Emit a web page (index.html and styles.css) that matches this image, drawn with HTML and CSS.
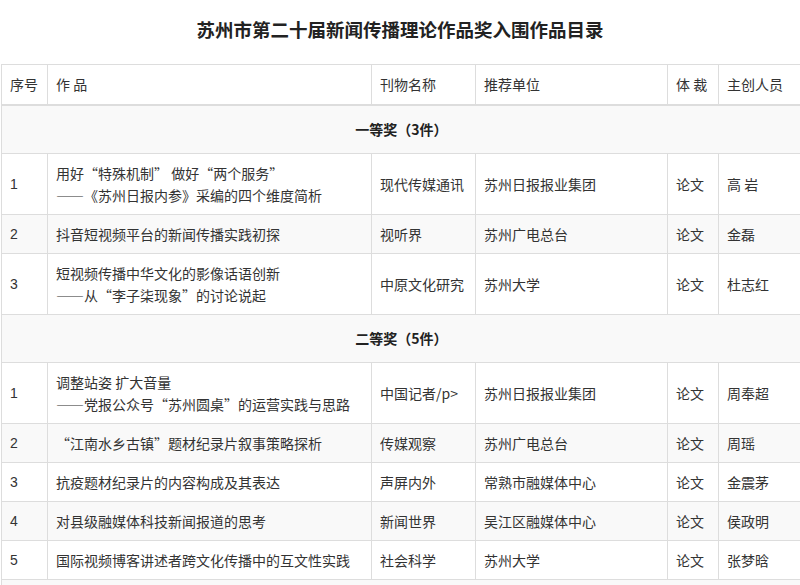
FILE: index.html
```html
<!DOCTYPE html>
<html lang="zh-CN">
<head>
<meta charset="utf-8">
<title>苏州市第二十届新闻传播理论作品奖入围作品目录</title>
<link rel="stylesheet" href="styles.css">
</head>
<body>
<div class="page">
  <h1 class="title">苏州市第二十届新闻传播理论作品奖入围作品目录</h1>
  <div class="table-wrap">
    <table class="list">
      <colgroup>
        <col class="c-no">
        <col class="c-work">
        <col class="c-pub">
        <col class="c-unit">
        <col class="c-type">
        <col class="c-author">
      </colgroup>
      <thead>
        <tr>
          <th>序号</th>
          <th>作 品</th>
          <th>刊物名称</th>
          <th>推荐单位</th>
          <th>体 裁</th>
          <th>主创人员</th>
        </tr>
      </thead>
      <tbody>
        <tr class="section"><td colspan="6">一等奖（3件）</td></tr>
        <tr>
          <td class="num">1</td>
          <td>用好“特殊机制” 做好“两个服务”<br>——《苏州日报内参》采编的四个维度简析</td>
          <td>现代传媒通讯</td>
          <td>苏州日报报业集团</td>
          <td>论文</td>
          <td>高 岩</td>
        </tr>
        <tr>
          <td class="num">2</td>
          <td>抖音短视频平台的新闻传播实践初探</td>
          <td>视听界</td>
          <td>苏州广电总台</td>
          <td>论文</td>
          <td>金磊</td>
        </tr>
        <tr>
          <td class="num">3</td>
          <td>短视频传播中华文化的影像话语创新<br>——从“李子柒现象”的讨论说起</td>
          <td>中原文化研究</td>
          <td>苏州大学</td>
          <td>论文</td>
          <td>杜志红</td>
        </tr>
        <tr class="section"><td colspan="6">二等奖（5件）</td></tr>
        <tr>
          <td class="num">1</td>
          <td>调整站姿 扩大音量<br>——党报公众号“苏州圆桌”的运营实践与思路</td>
          <td>中国记者/p&gt;</td>
          <td>苏州日报报业集团</td>
          <td>论文</td>
          <td>周奉超</td>
        </tr>
        <tr>
          <td class="num">2</td>
          <td>“江南水乡古镇”题材纪录片叙事策略探析</td>
          <td>传媒观察</td>
          <td>苏州广电总台</td>
          <td>论文</td>
          <td>周瑶</td>
        </tr>
        <tr>
          <td class="num">3</td>
          <td>抗疫题材纪录片的内容构成及其表达</td>
          <td>声屏内外</td>
          <td>常熟市融媒体中心</td>
          <td>论文</td>
          <td>金震茅</td>
        </tr>
        <tr>
          <td class="num">4</td>
          <td>对县级融媒体科技新闻报道的思考</td>
          <td>新闻世界</td>
          <td>吴江区融媒体中心</td>
          <td>论文</td>
          <td>侯政明</td>
        </tr>
        <tr>
          <td class="num">5</td>
          <td>国际视频博客讲述者跨文化传播中的互文性实践</td>
          <td>社会科学</td>
          <td>苏州大学</td>
          <td>论文</td>
          <td>张梦晗</td>
        </tr>
        <tr class="section"><td colspan="6">三等奖（8件）</td></tr>
      </tbody>
    </table>
  </div>
</div>
</body>
</html>
```
FILE: styles.css
```css
html, body {
  margin: 0;
  padding: 0;
  background: #fff;
}

body {
  font-family: "Noto Sans CJK SC", "Liberation Sans", sans-serif;
  color: #333;
  font-size: 14px;
  overflow: hidden;
}

.page {
  width: 800px;
  overflow: hidden;
}

.title {
  margin: 0;
  padding: 18px 0 24px;
  text-align: center;
  font-size: 18.5px;
  line-height: 22px;
  font-weight: bold;
  color: #222;
}

.table-wrap {
  padding-left: 1px;
}

.list {
  border-collapse: collapse;
  table-layout: fixed;
  width: 800px;
  border: 1px solid #ddd;
}

.c-no { width: 46px; }
.c-work { width: 324px; }
.c-pub { width: 104px; }
.c-unit { width: 192px; }
.c-type { width: 51px; }
.c-author { width: 83px; }

.list th,
.list td {
  border: 1px solid #ddd;
  padding: 8px;
  line-height: 22px;
  text-align: left;
  vertical-align: middle;
  font-weight: normal;
  white-space: nowrap;
  overflow: hidden;
}

.list thead th {
  border-bottom: 2px solid #ddd;
  padding-bottom: 9px;
}

.list tbody tr:nth-of-type(odd) {
  background: #f9f9f9;
}

.list .section td {
  text-align: center;
  font-weight: bold;
  padding: 12px 8px 13px;
  color: #222;
}

.list .num {
  font-family: "Liberation Sans", "Noto Sans CJK SC", sans-serif;
}
```
